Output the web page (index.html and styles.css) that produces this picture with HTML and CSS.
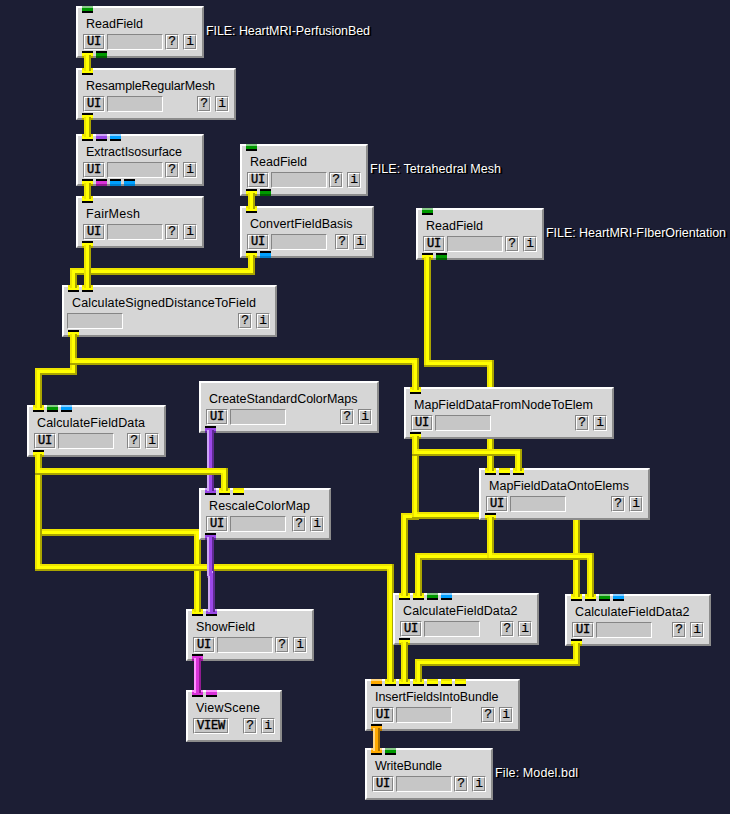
FILE: index.html
```html
<!DOCTYPE html>
<html lang="en">
<head>
<meta charset="utf-8">
<title>Dataflow network</title>
<link rel="stylesheet" href="styles.css">
</head>
<body>
<main class="canvas" id="canvas">
  <svg class="pipes" id="pipes" width="730" height="814"></svg>
</main>
<script src="network.js"></script>
</body>
</html>
```
FILE: network.js
```js
// Ports: g green, y yellow, p purple, b blue, m magenta, o orange.
// An upper-case letter marks a port that has a pipe attached.
const modules = [
  ["ReadField", 76, 6, 128, 57, "g", "Yg"],
  ["ResampleRegularMesh", 76, 68, 160, 129, "Y", "Y"],
  ["ExtractIsosurface", 76, 134, 128, 96, "Ypb", "Ymbb"],
  ["FairMesh", 76, 196, 128, 54, "Y", "Y"],
  ["ReadField", 240, 144, 128, 57, "g", "Yg"],
  ["ConvertFieldBasis", 240, 206, 134, 102.5, "Y", "Yb"],
  ["ReadField", 416, 208, 128, 57, "g", "Yg"],
  ["CalculateSignedDistanceToField", 62, 285, 215, 184, "YY", "Y", "none"],
  ["CalculateFieldData", 27, 405, 139, 108, "Ygb", "Y"],
  ["CreateStandardColorMaps", 199, 381, 180, 148.5, "", "P"],
  ["RescaleColorMap", 199, 488, 132, 101, "PYy", "P"],
  ["MapFieldDataFromNodeToElem", 404, 387, 210, 179, "Y", "Y"],
  ["MapFieldDataOntoElems", 479, 468, 171, 140, "YyY", "Y"],
  ["CalculateFieldData2", 393, 593, 146, 114.5, "YYgb", "Y"],
  ["CalculateFieldData2", 565, 594, 146, 114.5, "YYgb", "Y"],
  ["ShowField", 186, 609, 128, 59, "YP", "M"],
  ["ViewScene", 186, 690, 96, 64, "Mm", "", "view"],
  ["InsertFieldsIntoBundle", 365, 679, 155, 123.5, "oYYYyyy", "O"],
  ["WriteBundle", 365, 748, 128, 67, "Og", ""]
];

const notes = [
  ["FILE: HeartMRI-PerfusionBed", 206, 23, 164],
  ["FILE: Tetrahedral Mesh", 370, 161, 131],
  ["FILE: HeartMRI-FIberOrientation", 546, 225, 180],
  ["File: Model.bdl", 495, 765, 83]
];

const pipes = [
  ["y", "M87.5 56V70"],
  ["y", "M87.5 118V136"],
  ["y", "M87.5 184V198"],
  ["y", "M251.5 194V208"],
  ["y", "M251.5 256V271.5H73.5V287"],
  ["y", "M87.5 246V287"],
  ["y", "M73.5 335V371.5H38.5V407"],
  ["y", "M73.5 335V361.5H415.5V389"],
  ["y", "M427.5 258V363.5H490.5V470"],
  ["y", "M415.5 437V516.5H404.5V595"],
  ["y", "M415.5 437V515.5H576.5V596"],
  ["y", "M415.5 437V452.5H518.5V470"],
  ["y", "M490.5 518V556.5H418.5V595"],
  ["y", "M490.5 518V556.5H590.5V596"],
  ["p", "M210.5 431V490"],
  ["y", "M38.5 455V532.5H197.5V611"],
  ["y", "M38.5 455V567.5H390.5V681"],
  ["y", "M38.5 455V471.5H224.5V490"],
  ["p", "M210.5 538V574.5H211.5V611"],
  ["y", "M404.5 643V681"],
  ["y", "M576.5 644V662.5H418.5V681"],
  ["m", "M197.5 659V692"],
  ["o", "M376.5 729V750"]
];

const ports = (side, codes) => codes
  ? `<div class="ports ${side}">` + [...codes].map(c =>
      `<i class="port ${c.toLowerCase()}${c < "a" ? " on" : ""}"></i>`).join("") + "</div>"
  : "";
const button = (text, kind) =>
  `<span class="well ${kind}"><button>${text}</button></span>`;
const label = (text, width) =>
  `<svg class="text" height="18"><text y="12" textLength="${width}">${text}</text></svg>`;

let html = "";
for (const [name, x, y, w, tw, top, bottom, kind] of modules) {
  const main = kind === "view" ? button("VIEW", "view")
    : (kind === "none" ? "" : button("UI", "ui")) + '<span class="progress"></span>';
  html += `<section class="module ${kind || ""}" style="left:${x}px;top:${y}px;width:${w}px">
    ${label(name, tw)}
    <div class="row">${main}<span class="help">${button("?", "small")}${button("i", "small")}</span></div>
    ${ports("in", top)}${ports("out", bottom)}</section>`;
}
for (const [text, x, y, w] of notes) {
  html += `<div class="note" style="left:${x}px;top:${y}px">${label(text, w)}</div>`;
}
document.getElementById("canvas").insertAdjacentHTML("beforeend", html);
document.getElementById("pipes").innerHTML = pipes.map(([c, d]) =>
  `<g class="pipe ${c}"><path class="shade" d="${d}"/><path class="light" d="${d}"/><path class="core" d="${d}"/></g>`
).join("");
```
FILE: styles.css
```css
* { box-sizing: border-box; }
body { margin: 0; background: #1c1e34; }
.canvas { position: relative; width: 730px; height: 814px; overflow: hidden; }
.pipes { display: block; }

.y { --c: #ffff00; --hi: #ede500; --lo: #aaa500; }
.g { --c: #009900; --hi: #87c987; --lo: #006200; }
.p { --c: #9b48e8; --hi: #cda5f5; --lo: #5e2a91; }
.b { --c: #00a0ff; --hi: #8dcfff; --lo: #0080d0; }
.m { --c: #d932d9; --hi: #ff91ff; --lo: #911c91; }
.o { --c: #ffaa00; --hi: #ffd681; --lo: #aa7000; }

.pipe path { fill: none; shape-rendering: crispEdges; }
.pipe .shade { stroke: var(--lo); stroke-width: 7; }
.pipe .light { stroke: var(--hi); stroke-width: 5; transform: translate(-1px, -1px); }
.pipe .core { stroke: var(--c); stroke-width: 3; }

.module {
  position: absolute;
  height: 52px;
  padding: 8px 5px 0;
  background: #d6d6d6;
  border: 2px solid;
  border-color: #fff #8c8c8c #8c8c8c #fff;
}
.module.none { padding-left: 3px; }
.text {
  display: block;
  width: 100%;
  overflow: visible;
  font: 12.5px "Liberation Sans", Arial, sans-serif;
  fill: #000;
}
.module > .text { margin-left: 3px; }
.module.none > .text { margin-left: 5px; }
.row { display: flex; gap: 2px; height: 16px; }
.help { display: flex; gap: 4px; margin-left: auto; }
.well, .progress {
  display: flex;
  height: 16px;
  border: 1px solid;
  border-color: #858585 #fff #fff #858585;
}
.progress { width: 56px; background: #c6c6c6; }
.ui { width: 22px; }
.view { width: 36px; }
.module.view { width: 96px; }
.small { width: 14px; }
button {
  flex: 1;
  height: 14px;
  padding: 0;
  margin: 0;
  border: 1px solid;
  border-color: #fff #858585 #858585 #fff;
  background: #c6c6c6;
  color: #000;
  font: 12px/12px "Liberation Mono", "Courier New", monospace;
  letter-spacing: -0.2px;
  text-align: center;
  -webkit-text-stroke: 0.4px #000;
}
.small button { font-size: 13px; -webkit-text-stroke-width: 0.2px; }

.ports { position: absolute; left: 4px; display: flex; gap: 3px; }
.ports.in { top: -2px; }
.ports.out { bottom: -2px; }
.port { position: relative; width: 11px; height: 7px; }
.in .port {
  background: linear-gradient(var(--hi) 0 2px, var(--c) 2px 5px, #000 5px);
}
.out .port {
  background: linear-gradient(#000 0 2px, var(--c) 2px 5px, var(--lo) 5px);
}
.port.on::after {
  content: "";
  position: absolute;
  left: 2px;
  width: 7px;
  height: 3px;
  background: linear-gradient(90deg, var(--hi) 0 2px, var(--c) 2px 5px, var(--lo) 5px);
}
.in .port.on::after { top: 0; }
.out .port.on::after { bottom: 0; }

.note { position: absolute; }
.note .text { fill: #fff; text-shadow: 1px 1px 0 #000, 2px 1px 0 #000; }
```
